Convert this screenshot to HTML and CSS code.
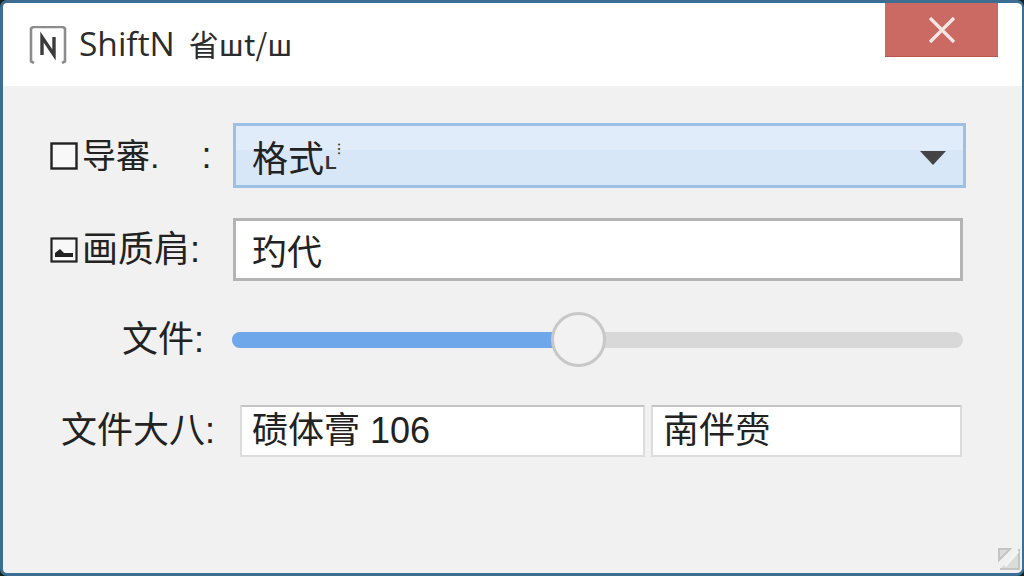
FILE: index.html
```html
<!DOCTYPE html>
<html lang="zh">
<head>
<meta charset="utf-8">
<title>ShiftN</title>
<link rel="stylesheet" href="styles.css">
</head>
<body>
<div class="window">
  <header class="titlebar">
    <svg class="app-icon" viewBox="0 0 38 38" width="38" height="38">
      <path d="M5 37l-3-1.500V2.500L4 1h30l2 1.500v33L33 37" fill="none" stroke="#8c8c8c" stroke-width="2.600"/>
      <path d="M13 29V11l12 18V11" fill="none" stroke="#3c3c3c" stroke-width="3.400"/>
    </svg>
    <span class="app-name">ShiftN</span>
    <span class="app-sub">省шt/ш</span>
    <button class="close" type="button">
      <svg viewBox="0 0 28 28" width="28" height="28">
        <path d="M2 2l24 24M26 2L2 26" stroke="#f6e6e3" stroke-width="3.200" fill="none"/>
      </svg>
    </button>
  </header>
  <main class="content">
    <div class="row row-select">
      <label class="label label-icon">
        <svg class="label-glyph" viewBox="0 0 28 28" width="28" height="28"><rect x="1.500" y="1.500" width="25" height="25" fill="#f8f8f8" stroke="#222" stroke-width="2.400"/></svg>
        <span class="label-tight">导審.</span><span class="colon-far">:</span>
      </label>
      <div class="select">
        <span>格式</span><span class="select-frag">L</span><span class="select-dots">⁝</span>
        <span class="arrow"></span>
      </div>
    </div>
    <div class="row row-input">
      <label class="label label-icon">
        <svg class="label-glyph" viewBox="0 0 28 28" width="28" height="28"><rect x="1.500" y="2.500" width="25" height="23" fill="#f8f8f8" stroke="#222" stroke-width="2.200"/><path d="M5 21v-4l5-4 4 4h9v4z" fill="#222"/></svg>
        <span>画质肩:</span>
      </label>
      <div class="input">玓代</div>
    </div>
    <div class="row row-slider">
      <label class="label label-slider">文件:</label>
      <div class="slider">
        <div class="track"><div class="fill" style="width:44%"></div></div>
        <div class="thumb"></div>
      </div>
    </div>
    <div class="row row-size">
      <label class="label label-size">文件大八:</label>
      <div class="field field-wide">碛体膏 106</div>
      <div class="field field-narrow">南伴赍</div>
    </div>
    <svg class="grip" viewBox="0 0 24 24" width="24" height="24">
      <path d="M2 2h11L2 13zM22 2v20H3" fill="#dcdcdc" stroke="#c4c4c4" stroke-width="2"/>
      <path d="M8 19L21 4" stroke="#f4f4f4" stroke-width="3"/>
    </svg>
  </main>
</div>
</body>
</html>
```
FILE: styles.css
```css
* { box-sizing: border-box; }
html, body { margin: 0; height: 100%; }
body {
  background: #14231c;
  font-family: "Liberation Sans", "Noto Sans CJK SC", sans-serif;
  color: #222;
  overflow: hidden;
}
.window {
  position: relative;
  height: 576px;
  display: flex;
  flex-direction: column;
  border: solid #3c6d92;
  border-width: 3px 2px 3px 3px;
  border-radius: 7px;
  overflow: hidden;
}
.titlebar {
  height: 83px;
  flex: none;
  background: #fff;
  display: flex;
  align-items: flex-start;
  padding: 21px 0 0 26px;
  position: relative;
}
.app-icon { flex: none; margin-top: 2px; }
.app-name {
  font-family: "Open Sans", sans-serif;
  font-size: 33.500px;
  line-height: 38px;
  margin-left: 12px;
  color: #2c2c2c;
}
.app-sub {
  font-family: "Noto Sans CJK SC", sans-serif;
  font-size: 30px;
  line-height: 38px;
  margin-left: 14px;
  color: #2c2c2c;
}
.close {
  position: absolute;
  right: 24px;
  top: 0;
  width: 113px;
  height: 54px;
  padding: 0;
  border: 0;
  border-bottom: 1px solid #b9544c;
  background: #cb6a62;
  display: flex;
  align-items: center;
  justify-content: center;
}
.content {
  flex: 1;
  background: #f1f1f1;
  padding: 37px 0 0 0;
  position: relative;
  display: flex;
  flex-direction: column;
}
.row { display: flex; align-items: center; }
.label {
  width: 230px;
  flex: none;
  display: flex;
  align-items: center;
  font-size: 36px;
  line-height: 44px;
  white-space: nowrap;
}
.label-icon { padding-left: 47px; }
.label-slider { width: 229px; padding-right: 28px; justify-content: flex-end; }
.label-size { width: 237px; padding-right: 25px; justify-content: flex-end; }
.label-glyph { flex: none; margin-right: 4px; }
.label-tight { font-size: 34px; }
.colon-far { margin-left: 42px; }
.row-select { height: 65px; }
.select {
  width: 733px;
  height: 65px;
  border: 3px solid #9dc0e6;
  background: linear-gradient(#e0ecfa 0 40%, #d8e7f7 40% 100%);
  display: flex;
  align-items: center;
  padding-left: 16px;
  font-size: 36px;
  position: relative;
}
.select-frag { font-size: 19px; font-weight: bold; color: #333; align-self: flex-end; margin-bottom: 11px; margin-left: 1px; }
.select-dots { font-size: 15px; line-height: 15px; color: #333; align-self: flex-start; margin-top: 15px; }
.arrow {
  position: absolute;
  right: 17px;
  top: 25px;
  border-style: solid;
  border-width: 14px 13px 0;
  border-color: #444 transparent transparent;
}
.row-input { height: 63px; margin-top: 30px; }
.input {
  width: 730px;
  height: 63px;
  border: 3px solid #b4b4b4;
  background: #fff;
  display: flex;
  align-items: center;
  padding-left: 16px;
  font-size: 35px;
}
.row-slider { height: 55px; margin-top: 31px; }
.slider {
  position: relative;
  width: 731px;
  height: 55px;
  display: flex;
  align-items: center;
}
.track {
  width: 100%;
  height: 16px;
  background: #d8d8d8;
  border-radius: 8px;
  overflow: hidden;
}
.fill { height: 100%; background: #6ea8ea; }
.thumb {
  position: absolute;
  left: 319px;
  top: 0;
  width: 55px;
  height: 55px;
  border-radius: 50%;
  border: 3px solid #c8c8c8;
  background: #f2f2f2;
}
.row-size { height: 52px; margin-top: 38px; }
.field {
  height: 52px;
  background: #fff;
  border: 2px solid #dcdcdc;
  border-top-color: #c4c4c4;
  display: flex;
  align-items: center;
  padding: 0 0 8px 10px;
  font-size: 36px;
}
.field-wide { width: 405px; margin-right: 6px; }
.field-narrow { width: 311px; }
.grip { position: absolute; right: 1px; bottom: 2px; }
```
